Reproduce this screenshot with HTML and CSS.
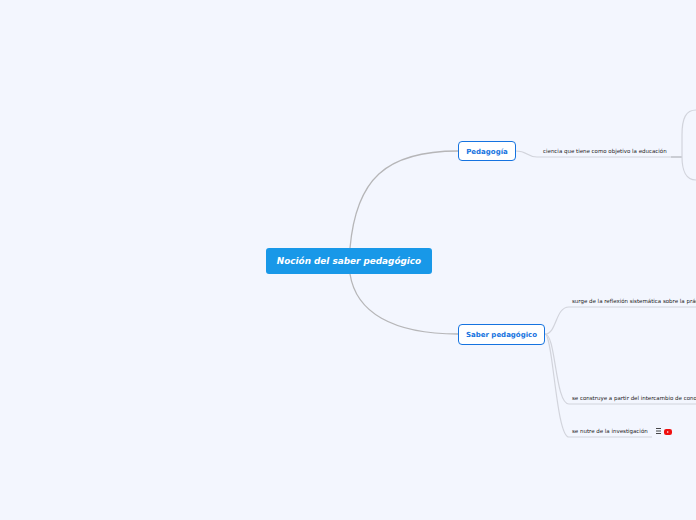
FILE: index.html
```html
<!DOCTYPE html>
<html lang="es">
<head>
<meta charset="utf-8">
<title>Noción del saber pedagógico</title>
<link rel="stylesheet" href="styles.css">
</head>
<body>
<main class="canvas">
  <svg class="links" width="696" height="520" viewBox="0 0 696 520">
    <g class="main-link">
      <path d="M350 248C356 180 385 151 458 151"/>
      <path d="M350 274C356 312 392 334 458 334"/>
    </g>
    <g class="sub-link">
      <path d="M516 151C528 151 526 157 537 157H682"/>
      <path class="joint" d="M671 157H682"/>
      <path d="M696 110C686 110 682 118 682 135V157C682 170 686 180 696 180"/>
      <path d="M545 334C557 334 555 307 569 307H696"/>
      <path d="M545 334C556 334 555 404 569 404H696"/>
      <path d="M545 334C553 334 556 437 569 437H652"/>
    </g>
  </svg>
  <div class="node root">Noción del saber pedagógico</div>
  <div class="node topic topic-a">Pedagogía</div>
  <div class="node topic topic-b">Saber pedagógico</div>
  <div class="label label-a">ciencia que tiene como objetivo la educación</div>
  <div class="label label-b">surge de la reflexión sistemática sobre la práctica</div>
  <div class="label label-c">se construye a partir del intercambio de conocimientos</div>
  <div class="label label-d">se nutre de la investigación</div>
  <div class="icons">
    <svg width="5" height="6" viewBox="0 0 5 6"><path class="menu" d="M0 .5H5M0 3H5M0 5.5H5"/></svg>
    <svg width="8" height="6" viewBox="0 0 8 6"><rect class="yt" width="8" height="6" rx="2.2"/><path class="yt-play" d="M3.2 2 4.8 3 3.2 4Z"/></svg>
  </div>
</main>
</body>
</html>
```
FILE: styles.css
```css
html, body {
  margin: 0;
  height: 100%;
  overflow: hidden;
  background: #f3f6fe;
}
.canvas {
  position: relative;
  width: 696px;
  height: 520px;
  overflow: hidden;
  font-family: "DejaVu Sans", sans-serif;
}
.links {
  position: absolute;
  left: 0;
  top: 0;
}
.links path {
  fill: none;
}
.main-link path {
  stroke: #b6b6b8;
  stroke-width: 1.3;
}
.sub-link path {
  stroke: #d2d4dc;
  stroke-width: 1.2;
}
.sub-link .joint {
  stroke: #c8cad2;
  stroke-width: 1.8;
}
.node {
  position: absolute;
  box-sizing: border-box;
  display: flex;
  align-items: center;
  justify-content: center;
  white-space: nowrap;
}
.root {
  left: 266px;
  top: 248px;
  width: 166px;
  height: 26px;
  background: #1898e8;
  border-radius: 3px;
  color: #fff;
  font-size: 8.85px;
  font-weight: 700;
  font-style: italic;
}
.topic {
  background: #fff;
  border: 1px solid #1573e0;
  border-radius: 4px;
  color: #1573e0;
  font-size: 7px;
  font-weight: 700;
}
.topic-a {
  left: 458px;
  top: 141px;
  width: 58px;
  height: 20px;
  padding-top: 1px;
}
.topic-b {
  left: 458px;
  top: 324px;
  width: 87px;
  height: 21px;
}
.label {
  position: absolute;
  font-size: 5.47px;
  line-height: 8px;
  color: #222;
  white-space: nowrap;
}
.label-a { left: 543px; top: 147px; }
.label-b { left: 572px; top: 297px; }
.label-c { left: 572px; top: 394px; }
.label-d { left: 572px; top: 427px; }
.icons {
  position: absolute;
  left: 656px;
  top: 428px;
  display: flex;
  align-items: flex-start;
  gap: 3px;
}
.icons svg {
  display: block;
}
.icons svg + svg {
  margin-top: 1px;
}
.menu {
  stroke: #333;
  stroke-width: 0.9;
  fill: none;
}
.yt { fill: #f01010; }
.yt-play { fill: #fff; }
```
